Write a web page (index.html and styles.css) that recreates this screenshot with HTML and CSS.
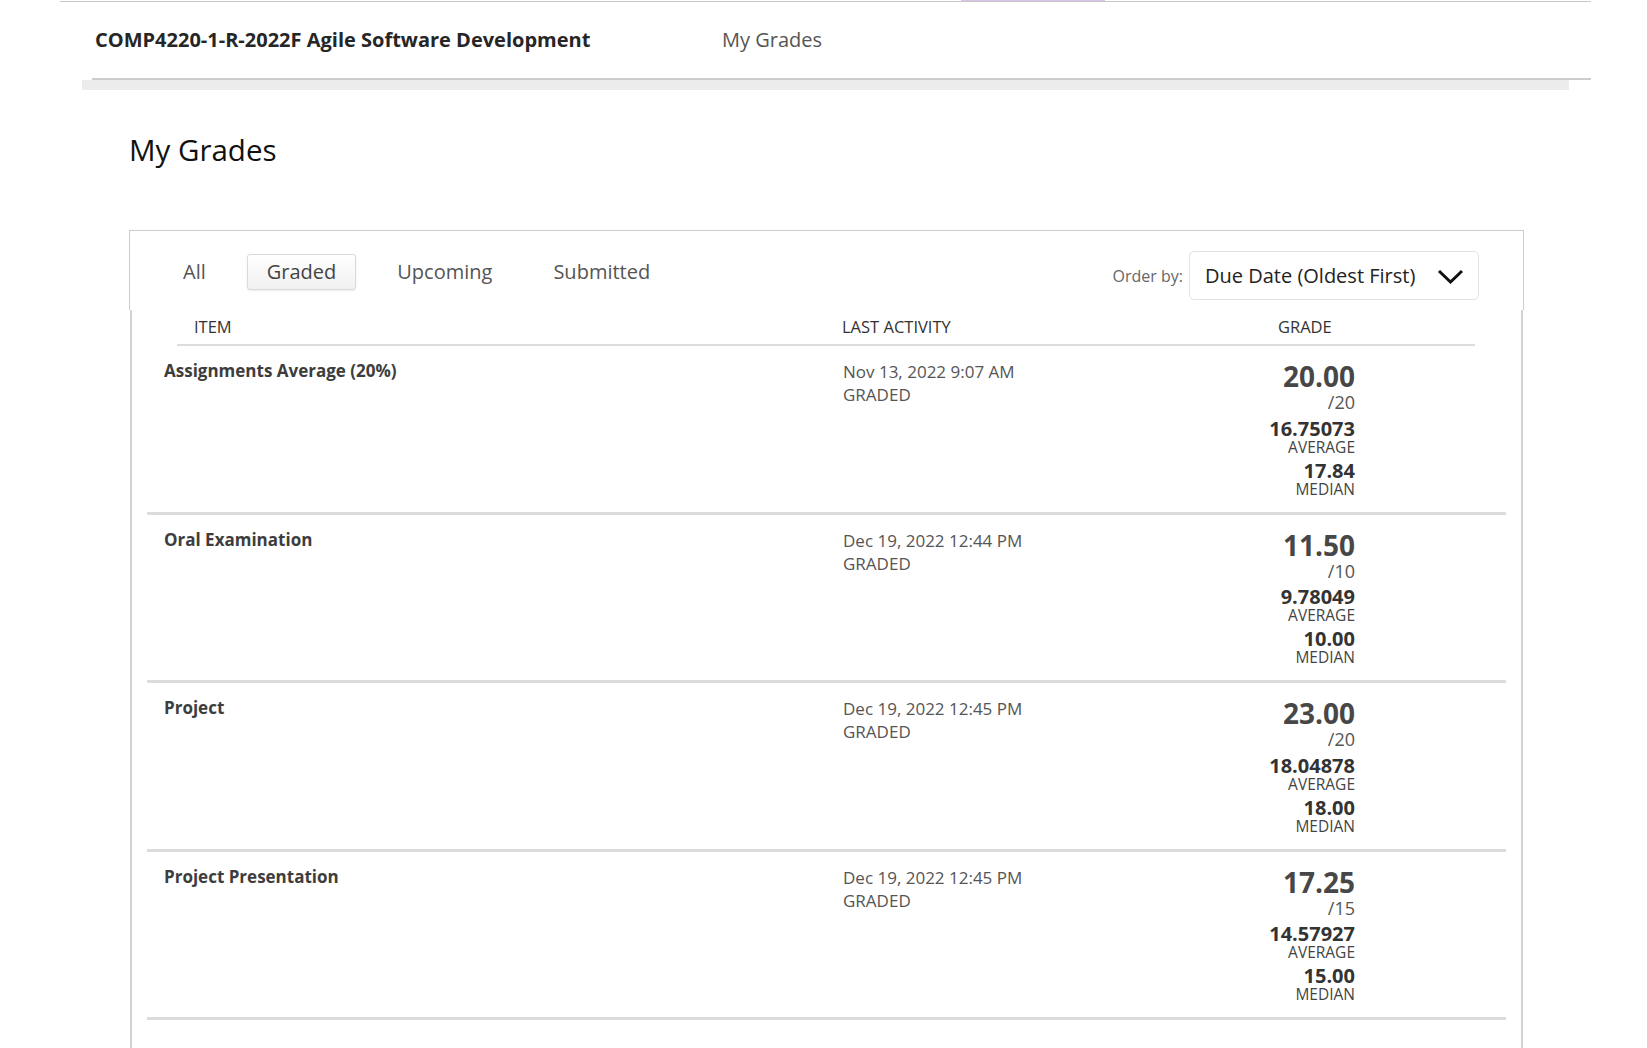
FILE: index.html
```html
<!DOCTYPE html>
<html lang="en">
<head>
<meta charset="utf-8">
<title>My Grades</title>
<link rel="stylesheet" href="styles.css">
</head>
<body>
<header class="course-bar">
  <span class="accent"></span>
  <div class="course-nav">
    <span class="course-title">COMP4220-1-R-2022F Agile Software Development</span>
    <span class="nav-link">My Grades</span>
  </div>
  <div class="band"></div>
</header>

<main class="page">
  <h1 class="page-title">My Grades</h1>

  <section class="card">
    <div class="card-top">
      <nav class="tabs">
        <span class="tab">All</span>
        <span class="tab active">Graded</span>
        <span class="tab">Upcoming</span>
        <span class="tab">Submitted</span>
      </nav>
      <div class="order">
        <span class="order-label">Order by:</span>
        <div class="select">
          <span>Due Date (Oldest First)</span>
          <svg class="chevron" width="27" height="15" viewBox="0 0 27 15"><polyline points="2,2 13.5,13 25,2" fill="none" stroke="#111" stroke-width="3"/></svg>
        </div>
      </div>
    </div>

    <div class="card-body">
      <div class="thead">
        <span class="th th-item">ITEM</span>
        <span class="th">LAST ACTIVITY</span>
        <span class="th">GRADE</span>
      </div>

      <div class="row">
        <div class="item">Assignments Average (20%)</div>
        <div class="activity"><div>Nov 13, 2022 9:07 AM</div><div>GRADED</div></div>
        <div class="grade">
          <div class="score">20.00</div>
          <div class="out-of">/20</div>
          <div class="stat">16.75073</div>
          <div class="stat-label">AVERAGE</div>
          <div class="stat stat-2">17.84</div>
          <div class="stat-label">MEDIAN</div>
        </div>
      </div>

      <div class="row">
        <div class="item">Oral Examination</div>
        <div class="activity"><div>Dec 19, 2022 12:44 PM</div><div>GRADED</div></div>
        <div class="grade">
          <div class="score">11.50</div>
          <div class="out-of">/10</div>
          <div class="stat">9.78049</div>
          <div class="stat-label">AVERAGE</div>
          <div class="stat stat-2">10.00</div>
          <div class="stat-label">MEDIAN</div>
        </div>
      </div>

      <div class="row">
        <div class="item">Project</div>
        <div class="activity"><div>Dec 19, 2022 12:45 PM</div><div>GRADED</div></div>
        <div class="grade">
          <div class="score">23.00</div>
          <div class="out-of">/20</div>
          <div class="stat">18.04878</div>
          <div class="stat-label">AVERAGE</div>
          <div class="stat stat-2">18.00</div>
          <div class="stat-label">MEDIAN</div>
        </div>
      </div>

      <div class="row">
        <div class="item">Project Presentation</div>
        <div class="activity"><div>Dec 19, 2022 12:45 PM</div><div>GRADED</div></div>
        <div class="grade">
          <div class="score">17.25</div>
          <div class="out-of">/15</div>
          <div class="stat">14.57927</div>
          <div class="stat-label">AVERAGE</div>
          <div class="stat stat-2">15.00</div>
          <div class="stat-label">MEDIAN</div>
        </div>
      </div>
    </div>
  </section>
</main>
</body>
</html>
```
FILE: styles.css
```css
html, body {
  margin: 0;
  padding: 0;
  background: #fff;
}
body {
  font-family: "Open Sans", "Noto Sans", sans-serif;
  color: #262626;
}

/* course header */
.course-bar {
  position: relative;
  margin-top: 1px;
  margin-left: 60px;
  width: 1531px;
  border-top: 1px solid #c8c8c8;
}
.accent {
  position: absolute;
  top: -2px;
  left: 901px;
  width: 144px;
  height: 1px;
  background: #dcc2e8;
}
.course-nav {
  margin-left: 32px;
  height: 78px;
  border-bottom: 2px solid #cccccc;
  display: flex;
  align-items: center;
  padding-left: 3px;
  padding-bottom: 2px;
  box-sizing: border-box;
}
.course-title {
  font-size: 20px;
  font-weight: 700;
  color: #262626;
  width: 627px;
}
.nav-link {
  font-size: 20px;
  color: #555;
}
.band {
  margin-left: 22px;
  width: 1487px;
  height: 10px;
  background: #ececec;
}

/* page */
.page {
  margin-left: 129px;
  width: 1395px;
}
.page-title {
  margin: 40px 0 0 0;
  font-size: 29.5px;
  line-height: 40px;
  font-weight: 400;
  color: #111;
}
.card {
  margin-top: 60px;
}
.card-top {
  height: 79px;
  border: 1px solid #cccccc;
  border-bottom: none;
  display: flex;
  justify-content: space-between;
  align-items: flex-start;
}
.tabs {
  display: flex;
  gap: 21px;
  padding-left: 33px;
  margin-top: 23px;
}
.tab {
  font-size: 20px;
  line-height: 26px;
  padding: 4px 19px;
  border: 1px solid transparent;
  border-radius: 3px;
  color: #555;
}
.tab.active {
  color: #444;
  border-color: #dadada;
  background: linear-gradient(#ffffff, #f1f1f1);
  box-shadow: 0 1px 2px rgba(0, 0, 0, 0.08);
}
.order {
  display: flex;
  align-items: center;
  gap: 6px;
  margin-top: 20px;
  margin-right: 44px;
}
.order-label {
  font-size: 16px;
  color: #666;
}
.select {
  width: 290px;
  height: 49px;
  box-sizing: border-box;
  border: 1px solid #e3e3e3;
  border-radius: 5px;
  display: flex;
  align-items: center;
  justify-content: space-between;
  padding: 0 14px 0 15px;
  font-size: 20px;
  color: #222;
}
.chevron {
  display: block;
  margin-top: 1px;
}

.card-body {
  margin: 0 1px;
  border-left: 2px solid #d2d2d2;
  border-right: 2px solid #d2d2d2;
  padding-bottom: 80px;
}
.thead {
  margin: 0 46px 0 45px;
  height: 34px;
  border-bottom: 2px solid #dcdcdc;
  display: grid;
  grid-template-columns: 665px 436px 1fr;
  align-items: center;
}
.th {
  font-size: 16.5px;
  line-height: 34px;
  color: #333;
}
.th-item {
  padding-left: 17px;
}

.row {
  margin: 0 15px;
  padding: 14px 0 14px;
  border-bottom: 3px solid #dcdcdc;
  display: grid;
  grid-template-columns: 696px 347px 165px 1fr;
  align-items: start;
}
.item {
  padding-left: 17px;
  font-size: 17px;
  line-height: 22px;
  font-weight: 700;
  color: #3d3d3d;
}
.activity {
  font-size: 17px;
  line-height: 23px;
  color: #555;
}
.grade {
  grid-column: 3;
  text-align: right;
  color: #444;
}
.score {
  margin-top: 1px;
  font-size: 28px;
  line-height: 30px;
  font-weight: 700;
  color: #474747;
}
.out-of {
  font-size: 18px;
  line-height: 22px;
  color: #555;
}
.stat {
  margin-top: 5.5px;
  font-size: 20px;
  line-height: 20px;
  font-weight: 700;
  color: #333;
}
.stat-2 {
  margin-top: 5px;
}
.stat-label {
  font-size: 15.5px;
  line-height: 17px;
  color: #444;
}
```
